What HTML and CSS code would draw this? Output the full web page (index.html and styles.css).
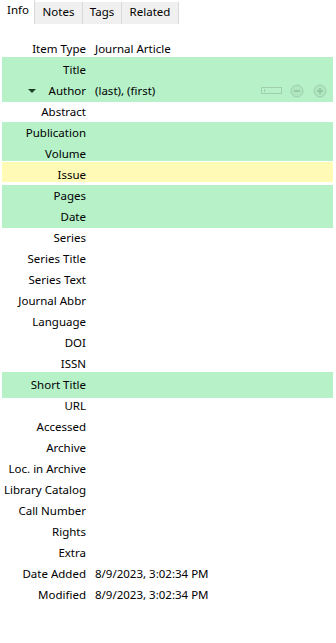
FILE: index.html
```html
<!DOCTYPE html>
<html lang="en">
<head>
	<meta charset="UTF-8">
	<meta name=viewport content="width=device-width,initial-scale=1">
	<title>Item Pane</title>

	<link rel="stylesheet" href="styles.css">
</head>
<body>

	<div class="tabs">
		<div class="tab selected tab-info">Info</div>
		<div class="tab tab-notes">Notes</div>
		<div class="tab tab-tags">Tags</div>
		<div class="tab tab-related">Related</div>
	</div>

	<div class="fields">
		<div class="row"><div class="label">Item Type</div><div class="value">Journal Article</div></div>

		<div class="group g-title">
			<div class="row"><div class="label">Title</div><div class="value"></div></div>
			<div class="row author">
				<div class="label"><span class="twisty"></span>Author</div>
				<div class="value">(last), (first)</div>
				<div class="controls">
					<svg class="field-box" width="22" height="8" viewBox="0 0 22 8"><rect x="0.5" y="0.5" width="20" height="6" fill="none" stroke="#9fd0ab"/><line x1="3.5" y1="2" x2="3.5" y2="5" stroke="#9fd0ab"/></svg>
					<svg width="14" height="14" viewBox="0 0 14 14"><circle cx="7" cy="7" r="6" fill="#aee6bf" stroke="#9fd0ab"/><line x1="4" y1="7" x2="10" y2="7" stroke="#8fc39d" stroke-width="1.5"/></svg>
					<svg width="14" height="14" viewBox="0 0 14 14"><circle cx="7" cy="7" r="6" fill="#aee6bf" stroke="#9fd0ab"/><line x1="4" y1="7" x2="10" y2="7" stroke="#8fc39d" stroke-width="1.5"/><line x1="7" y1="4" x2="7" y2="10" stroke="#8fc39d" stroke-width="1.5"/></svg>
				</div>
			</div>
		</div>

		<div class="row"><div class="label">Abstract</div><div class="value"></div></div>

		<div class="group g-pub">
			<div class="row"><div class="label">Publication</div><div class="value"></div></div>
			<div class="row"><div class="label">Volume</div><div class="value"></div></div>
		</div>

		<div class="group yellow g-issue">
			<div class="row"><div class="label">Issue</div><div class="value"></div></div>
		</div>

		<div class="group g-pages">
			<div class="row"><div class="label">Pages</div><div class="value"></div></div>
			<div class="row"><div class="label">Date</div><div class="value"></div></div>
		</div>

		<div class="row"><div class="label">Series</div><div class="value"></div></div>
		<div class="row"><div class="label">Series Title</div><div class="value"></div></div>
		<div class="row"><div class="label">Series Text</div><div class="value"></div></div>
		<div class="row"><div class="label">Journal Abbr</div><div class="value"></div></div>
		<div class="row"><div class="label">Language</div><div class="value"></div></div>
		<div class="row"><div class="label">DOI</div><div class="value"></div></div>
		<div class="row"><div class="label">ISSN</div><div class="value"></div></div>

		<div class="group g-short">
			<div class="row"><div class="label">Short Title</div><div class="value"></div></div>
		</div>

		<div class="row"><div class="label">URL</div><div class="value"></div></div>
		<div class="row"><div class="label">Accessed</div><div class="value"></div></div>
		<div class="row"><div class="label">Archive</div><div class="value"></div></div>
		<div class="row"><div class="label">Loc. in Archive</div><div class="value"></div></div>
		<div class="row"><div class="label">Library Catalog</div><div class="value"></div></div>
		<div class="row"><div class="label">Call Number</div><div class="value"></div></div>
		<div class="row"><div class="label">Rights</div><div class="value"></div></div>
		<div class="row"><div class="label">Extra</div><div class="value"></div></div>
		<div class="row"><div class="label">Date Added</div><div class="value">8/9/2023, 3:02:34 PM</div></div>
		<div class="row"><div class="label">Modified</div><div class="value">8/9/2023, 3:02:34 PM</div></div>
	</div>

</body>
</html>
```

FILE: styles.css
```css
body {
	margin: 0;
	background: #ffffff;
	font-family: "Segoe UI", "Noto Sans", sans-serif;
	font-size: 11.5px;
	color: #000000;
}

.tabs {
	display: flex;
	height: 24px;
}

.tab {
	box-sizing: border-box;
	height: 22px;
	margin-top: 2px;
	padding-top: 2px;
	background: #f0f0f0;
	border-right: 1px solid #d9d9d9;
	line-height: 16px;
	text-align: center;
}

.tab.selected {
	background: #ffffff;
	height: 24px;
	margin-top: 0;
	padding-top: 2px;
	text-align: left;
	padding-left: 7px;
}

.tab-info { width: 35px; }
.tab-notes { width: 48px; }
.tab-tags { width: 39px; }
.tab-related { width: 57px; }

.fields {
	padding-top: 14px;
}

.row {
	display: flex;
	height: 21px;
	line-height: 21px;
	position: relative;
}

.label {
	box-sizing: border-box;
	width: 86px;
	text-align: right;
	flex-shrink: 0;
}

.value {
	padding-left: 9px;
	white-space: nowrap;
}

.group {
	background: #b6f1c8;
	margin-left: 2px;
	margin-right: 3px;
}

.group .label {
	width: 84px;
}

.group.yellow {
	background: #fffab5;
}

.g-title {
	margin-top: -2px;
	margin-bottom: -1px;
	padding-top: 2px;
	padding-bottom: 1px;
}

.g-pub {
	height: 39px;
	margin-bottom: 3px;
}

.g-issue {
	margin-top: -2px;
	padding-top: 2px;
	height: 18px;
	margin-bottom: 3px;
}

.g-pages {
	padding-bottom: 1px;
	margin-bottom: -1px;
}

.g-short {
	margin-top: -2px;
	margin-bottom: -3px;
	padding-top: 2px;
	padding-bottom: 3px;
}

.twisty {
	position: absolute;
	left: 26px;
	top: 9px;
	width: 0;
	height: 0;
	border-left: 4px solid transparent;
	border-right: 4px solid transparent;
	border-top: 4px solid #1d3f26;
}

.controls {
	margin-left: auto;
	display: flex;
	align-items: center;
	gap: 9px;
	padding-right: 6px;
}

.controls svg {
	display: block;
}

.controls .field-box {
	margin-right: -2px;
}
```
